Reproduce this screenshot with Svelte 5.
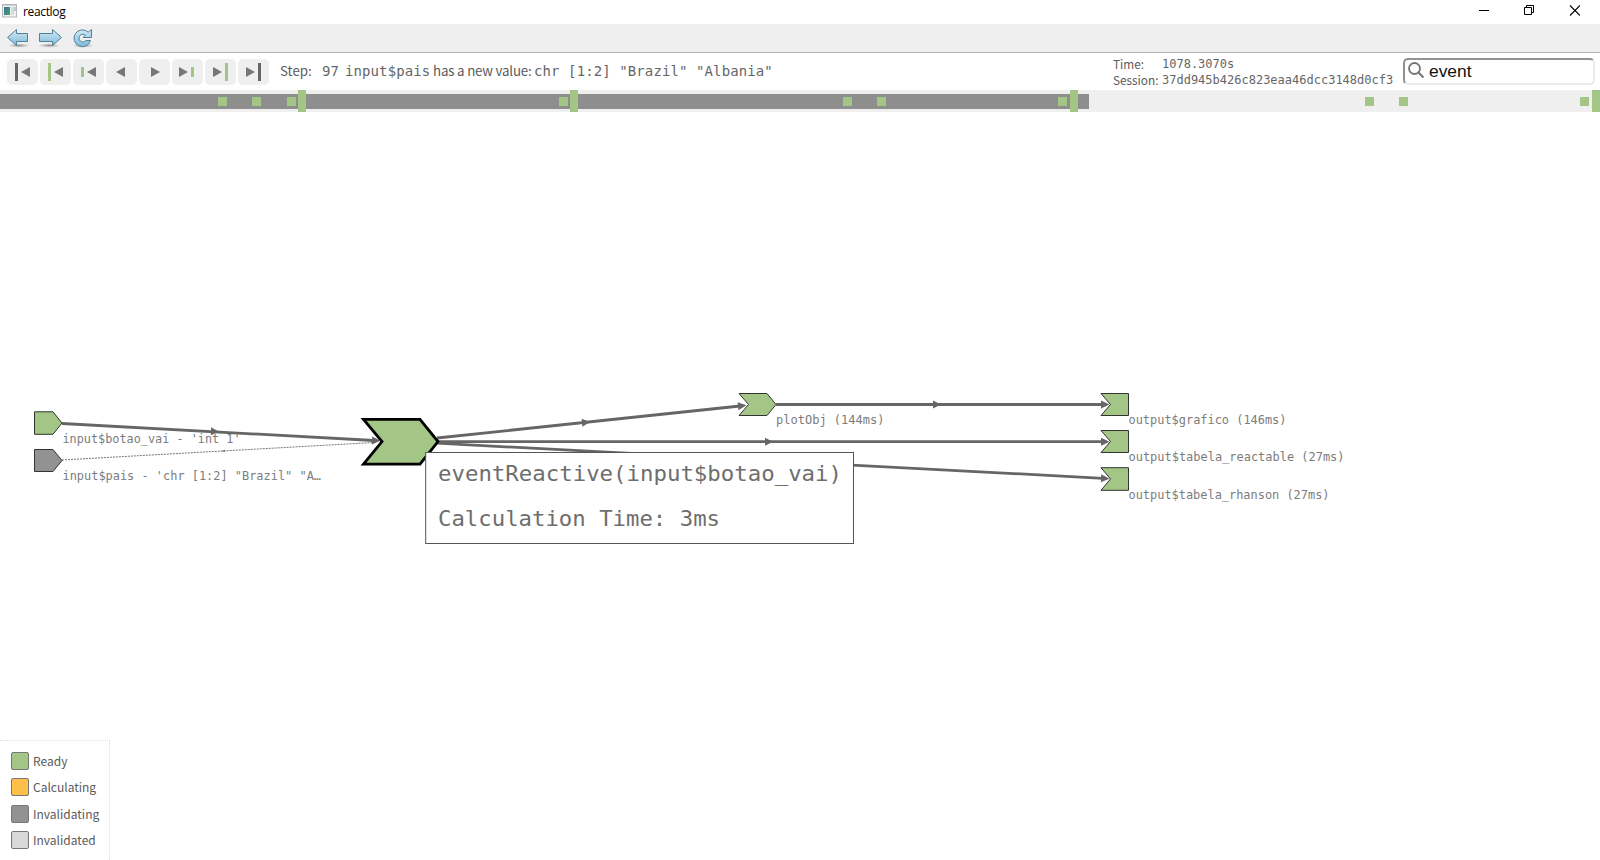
<script>
  const steps = [
    { bar: 'dark', dir: 'back' },
    { bar: 'tall', dir: 'back' },
    { bar: 'short', dir: 'back' },
    { bar: null, dir: 'back' },
    { bar: null, dir: 'next' },
    { bar: 'short', dir: 'next' },
    { bar: 'tall', dir: 'next' },
    { bar: 'dark', dir: 'next' }
  ];
  const bars = {
    dark: { y: 4, h: 18, fill: '#666' },
    tall: { y: 4, h: 18, fill: '#a3c586' },
    short: { y: 8, h: 10, fill: '#a3c586' }
  };
  // Horizontal position of the bar and of the arrow inside each button
  const layout = [
    [8, 14], [8, 14], [8, 14], [0, 10],
    [0, 12], [19, 7], [20, 8], [20, 8]
  ];
  const marks = [218, 252, 287, 559, 843, 877, 1058, 1365, 1399, 1580];
  const ticks = [298, 570, 1070, 1592];
  const statuses = [
    { name: 'Ready', color: '#a3c586' },
    { name: 'Calculating', color: '#fcbf49' },
    { name: 'Invalidating', color: '#929292' },
    { name: 'Invalidated', color: '#d9d9d9' }
  ];
  const labels = [
    { x: 62.5, y: 443, w: 178, t: "input$botao_vai - 'int 1'" },
    { x: 62.5, y: 480, w: 258.5, t: 'input$pais - \'chr [1:2] "Brazil" "A…' },
    { x: 776, y: 424, w: 108.5, t: 'plotObj (144ms)' },
    { x: 1128.5, y: 424, w: 158, t: 'output$grafico (146ms)' },
    { x: 1128.5, y: 461, w: 216, t: 'output$tabela_reactable (27ms)' },
    { x: 1128.5, y: 498.5, w: 201, t: 'output$tabela_rhanson (27ms)' }
  ];
  const edges = [
    [62, 423.5, 374, 440.5, 215, 431.5],
    [437, 438, 740, 406, 586, 422.3],
    [776, 404.5, 1103, 404.5, 937, 404.5],
    [437, 441.7, 1103, 441.7, 769, 441.7],
    [437, 443.2, 1103, 478.3, 770, 460.7]
  ];
  const angle = (e) => (Math.atan2(e[3] - e[1], e[2] - e[0]) * 180) / Math.PI;
</script>

<div class="window">
  <header class="title">
    <svg class="appicon" width="15" height="14" viewBox="0 0 15 14">
      <defs>
        <linearGradient id="thumb" x1="0" y1="0" x2="1" y2="1">
          <stop offset="0" stop-color="#3d6c9b" /><stop offset="1" stop-color="#45a865" />
        </linearGradient>
      </defs>
      <rect x=".5" y=".5" width="14" height="12.5" fill="#f2f2f2" stroke="#b3b7bc" />
      <path d="M1 1.5h13" stroke="#cfd3d7" />
      <rect x="2" y="3" width="6" height="8" fill="url(#thumb)" />
      <rect x="9" y="3" width="3" height="8" fill="#d5dbe2" />
      <path d="M13 3v4" stroke="#75b49a" />
    </svg>
    <span class="name">reactlog</span>
    <svg class="controls" width="101" height="11" viewBox="0 0 101 11" fill="none" stroke="#000">
      <path d="M0 5.5h10" />
      <path d="M45.5 2.5h7v7h-7zM47.5 2.5v-2h7v7h-2" />
      <path d="M91 .5l10 10M101 .5l-10 10" stroke-width="1.1" />
    </svg>
  </header>

  <nav class="browser">
    <svg width="94" height="20" viewBox="0 0 94 20">
      <defs>
        <linearGradient id="blue" x1="0" y1="0" x2="0" y2="1">
          <stop offset="0" stop-color="#d3eaf6" /><stop offset="1" stop-color="#7db9da" />
        </linearGradient>
        <radialGradient id="shade">
          <stop offset="0" stop-color="#777" stop-opacity=".8" /><stop offset="1" stop-color="#999" stop-opacity="0" />
        </radialGradient>
      </defs>
      <ellipse cx="19" cy="17.5" rx="11" ry="2.3" fill="url(#shade)" />
      <ellipse cx="49" cy="17.5" rx="11" ry="2.3" fill="url(#shade)" />
      <ellipse cx="83" cy="17.5" rx="11" ry="2.3" fill="url(#shade)" />
      <g fill="url(#blue)" stroke="#4f8198" stroke-linejoin="round">
        <path d="M7.5 9.5L16.500 1.500V5.500H27.500V13.500H16.500V17.500Z" />
        <path d="M61.500 9.500L52.500 1.500V5.500H39.500V13.500H52.500V17.500Z" />
        <path d="M88.200 4.200L91.500 1.500V9.500H83L85.500 7.200A3.900 3.900 0 1 0 86 12.500H90.500A8.400 8.400 0 1 1 88.200 4.200Z" />
      </g>
    </svg>
  </nav>

  <section class="toolbar">
    <div class="buttons">
      {#each steps as s, i}
        <button aria-label={s.dir}>
          <svg width="31" height="26" viewBox="0 0 31 26">
            {#if s.bar}
              <rect x={layout[i][0]} y={bars[s.bar].y} width="3" height={bars[s.bar].h} fill={bars[s.bar].fill} />
            {/if}
            {#if s.dir === 'back'}
              <path d="M{layout[i][1]} 13l9-5v10z" fill="#777" />
            {:else}
              <path d="M{layout[i][1] + 9} 13l-9-5v10z" fill="#777" />
            {/if}
          </svg>
        </button>
      {/each}
    </div>
    <div class="step">
      <span class="lbl">Step:</span><code class="num">97</code><code class="val">input$pais</code><span class="msg">has a new value:</span><code>chr [1:2] "Brazil" "Albania"</code>
    </div>
    <div class="info">
      <span>Time:</span><code>1078.3070s</code>
      <span>Session:</span><code>37dd945b426c823eaa46dcc3148d0cf3</code>
    </div>
    <div class="search">
      <svg width="17" height="17" viewBox="0 0 17 17" fill="none" stroke="#777">
        <circle cx="6.500" cy="6.500" r="5.500" stroke-width="1.800" />
        <path d="M10.500 10.500L15.500 15.500" stroke-width="2.200" />
      </svg>
      <span>event</span>
    </div>
  </section>

  <div class="timeline">
    <div class="progress"></div>
    {#each marks as m}<i class="mark" style="left:{m}px"></i>{/each}
    {#each ticks as t}<i class="tick" style="left:{t}px"></i>{/each}
  </div>

  <main>
    <svg class="graph" width="1600" height="748" viewBox="0 112 1600 748">
      <path d="M62 460L374 442.500" stroke="#777" stroke-width="1" stroke-dasharray="2 1" />
      <path d="M221 451.200l4-1.400v2.200z" fill="#777" />
      {#each labels as l}
        <text class="label" x={l.x} y={l.y} textLength={l.w} lengthAdjust="spacingAndGlyphs">{l.t}</text>
      {/each}
      <g stroke="#333" stroke-width="1" fill="#a3c586">
        <path d="M34.500 411.800H53L62 423L53 434.300H34.500Z" />
        <path d="M34.500 449.500H53L62 460.500L53 471.500H34.500Z" fill="#929292" />
        <path d="M739 393.500H767L776 404.500L767 415.500H739L748.500 404.500Z" />
        <path d="M1101 393.500H1128.500V415.500H1101L1110.500 404.500Z" />
        <path d="M1101 430.500H1128.500V452.500H1101L1110.500 441.500Z" />
        <path d="M1101 467.700H1128.500V490.300H1101L1110.500 479Z" />
      </g>
      {#each edges as e}
        <path d="M{e[0]} {e[1]}L{e[2]} {e[3]}" stroke="#666" stroke-width="2.800" />
        <path d="M-4-4L4 0L-4 4Z" fill="#666" transform="translate({e[4]} {e[5]}) rotate({angle(e)})" />
      {/each}
      <path d="M363.500 419.300H420L438 441.600L420 464.200H363.500L382 441.600Z" fill="#a3c586" stroke="#000" stroke-width="2.800" />
      {#each edges as e}
        <path d="M-2-4L6.500 0L-2 4Z" fill="#666" transform="translate({e[2]} {e[3]}) rotate({angle(e)})" />
      {/each}
      <rect x="425.700" y="452.500" width="427.800" height="91" fill="#fff" stroke="#555" />
      <text class="tip" x="438" y="481" textLength="404" lengthAdjust="spacingAndGlyphs">eventReactive(input$botao_vai)</text>
      <text class="tip" x="438" y="525.700" textLength="282" lengthAdjust="spacingAndGlyphs">Calculation Time: 3ms</text>
    </svg>
    <ul class="legend">
      {#each statuses as s}
        <li><i style="background:{s.color}"></i><span>{s.name}</span></li>
      {/each}
    </ul>
  </main>
</div>

<style>
  :global(body) { margin: 0; background: #fff; overflow: hidden; }
  .window {
    width: 1600px; height: 860px; display: flex; flex-direction: column; overflow: hidden;
    color: #5a5a5a; font-family: "Noto Sans CJK SC", "Noto Sans", sans-serif;
  }
  .title { height: 24px; display: flex; align-items: flex-start; flex: none; }
  .appicon { margin: 4px 6px 0 2px; }
  .name { font: 12px/16px "Open Sans", "Noto Sans", sans-serif; letter-spacing: -.35px; color: #000; padding-top: 4px; }
  .controls { margin: 5px 20px 0 auto; }
  .browser { height: 28px; flex: none; background: #efefef; border-bottom: 1px solid #b4b4b4; }
  .browser svg { display: block; margin-top: 4px; }
  .toolbar { height: 37px; flex: none; display: flex; align-items: flex-start; box-sizing: border-box; padding: 5px 5px 0 7px; }
  .buttons { display: flex; gap: 2px; padding-top: 1px; }
  button { width: 31px; height: 26px; padding: 0; border: 0; border-radius: 5px; background: #efefef; }
  button svg { display: block; }
  code { font-family: "DejaVu Sans Mono", monospace; }
  .step { display: flex; align-items: baseline; margin-left: 11px; width: 833px; white-space: nowrap; font-size: 13.3px; line-height: 26px; }
  .step code { font-size: 14px; letter-spacing: .1px; color: #666; }
  .step > * { flex: none; }
  .lbl { width: 42px; }
  .step .num { width: 23px; }
  .step .val { width: 88px; }
  .msg { width: 101px; letter-spacing: -.18px; }
  .info { display: grid; grid-template-columns: 49px 1fr; width: 290px; margin-top: -2px; font-size: 11.8px; line-height: 16px; }
  .info code { font-size: 12px; color: #666; }
  .search {
    width: 192px; height: 27px; box-sizing: border-box; display: flex; align-items: center; gap: 4px;
    padding: 0 0 2px 3px; border: 2px solid; border-color: #929292 #ebebeb #ebebeb #929292; border-radius: 5px;
    color: #111; font: 17.4px/20px "Liberation Sans", Arial, sans-serif;
  }
  .timeline { position: relative; height: 22px; flex: none; background: #efefef; box-sizing: border-box; padding-top: 4px; }
  .progress { width: 1089px; height: 15px; background: #8e8e8e; }
  .mark, .tick { position: absolute; background: #a3c586; }
  .mark { top: 7px; width: 9px; height: 9px; }
  .tick { top: 0; width: 8px; height: 22px; }
  main { position: relative; flex: 1; }
  .graph { display: block; }
  .label { font: 11.8px "DejaVu Sans Mono", monospace; fill: #7c7c7c; }
  .tip { font: 22px "DejaVu Sans Mono", monospace; fill: #6e6e6e; }
  .legend {
    position: absolute; left: 0; bottom: 0; width: 110px; height: 120px; box-sizing: border-box; margin: 0;
    padding: 7px 0 0 11px; list-style: none; border: 1px dotted #ddd; border-width: 1px 1px 0 0;
    background: #fff; font-size: 12px;
  }
  li { display: flex; align-items: center; gap: 4px; height: 26.3px; line-height: 26.3px; }
  li i { width: 18px; height: 18px; box-sizing: border-box; border: 1px solid #777; border-radius: 2px; }
</style>
